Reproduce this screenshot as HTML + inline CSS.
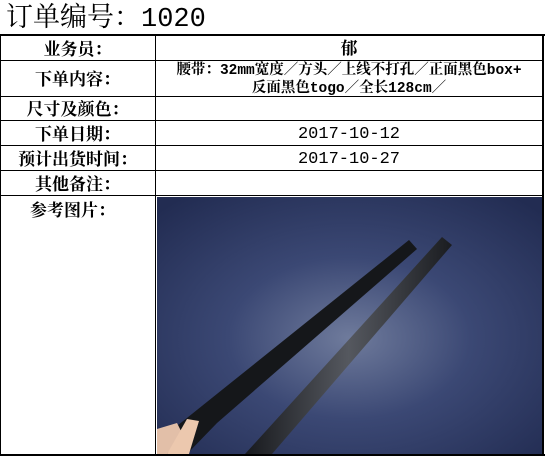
<!DOCTYPE html>
<html><head><meta charset="utf-8"><style>
body{margin:0;width:545px;height:457px;background:#fff;position:relative;overflow:hidden;font-family:"Liberation Serif","Noto Serif CJK SC",serif;color:#000}
.t{position:absolute;left:6px;top:1px;font-size:27px;line-height:32px}
.m{font-family:"Liberation Mono","Noto Serif CJK SC",monospace}
.h{position:absolute;background:#000;height:1px}
.v{position:absolute;background:#000;width:1px}
.l{position:absolute;left:0;width:155px;text-align:center;font-size:17px;font-weight:bold;line-height:20px}
.c{position:absolute;left:156px;width:386px;text-align:center;font-weight:bold}
</style></head><body>
<div class="t">订单编号：<span class="m">1020</span></div>
<div class="h" style="left:0;top:34px;width:545px;height:2px"></div>
<div class="h" style="left:0;top:60px;width:543px"></div>
<div class="h" style="left:0;top:96px;width:543px"></div>
<div class="h" style="left:0;top:120px;width:543px"></div>
<div class="h" style="left:0;top:145px;width:543px"></div>
<div class="h" style="left:0;top:170px;width:543px"></div>
<div class="h" style="left:0;top:195px;width:543px"></div>
<div class="h" style="left:0;top:454px;width:545px;height:2px"></div>
<div class="v" style="left:0;top:34px;height:422px"></div>
<div class="v" style="left:155px;top:34px;height:422px"></div>
<div class="v" style="left:542px;top:34px;height:422px;width:2px"></div>
<div class="l" style="top:40px">业务员：</div>
<div class="l" style="top:70px">下单内容：</div>
<div class="l" style="top:100px">尺寸及颜色：</div>
<div class="l" style="top:125px">下单日期：</div>
<div class="l" style="top:150px">预计出货时间：</div>
<div class="l" style="top:175px">其他备注：</div>
<div class="l" style="top:201px;text-align:left;padding-left:30px;box-sizing:border-box">参考图片：</div>
<div class="c" style="top:39px;font-size:17px;line-height:20px">郁</div>
<div class="c" style="top:62px;font-size:14.5px;line-height:17px">腰带：<span class="m">32mm</span>宽度／方头／上线不打孔／正面黑色<span class="m">box+</span><br>反面黑色<span class="m">togo</span>／全长<span class="m">128cm</span>／</div>
<div class="c m" style="top:125px;font-size:17px;font-weight:normal">2017-10-12</div>
<div class="c m" style="top:150px;font-size:17px;font-weight:normal">2017-10-27</div>
<svg style="position:absolute;left:157px;top:197px" width="385" height="257" viewBox="0 0 385 257">
<defs><radialGradient id="g" cx="0.5" cy="0.55" r="0.7"><stop offset="0" stop-color="#6f7b9c"/><stop offset="0.45" stop-color="#3b4874"/><stop offset="1" stop-color="#222c52"/></radialGradient>
<linearGradient id="b" x1="0" y1="0" x2="1" y2="0"><stop offset="0" stop-color="#181a1e"/><stop offset="0.5" stop-color="#55585f"/><stop offset="1" stop-color="#1a1c20"/></linearGradient></defs>
<rect width="385" height="257" fill="url(#g)"/>
<polygon points="0,257 0,245 252,43 260,52 60,226 30,257" fill="#15171a"/>
<polygon points="88,257 285,40 295,48 115,257" fill="url(#b)"/>
<polygon points="0,232 20,226 25,236 10,257 0,257" fill="#e2bfa8"/>
<polygon points="10,257 30,222 42,224 32,257" fill="#ecc8ae"/>
</svg>
</body></html>
